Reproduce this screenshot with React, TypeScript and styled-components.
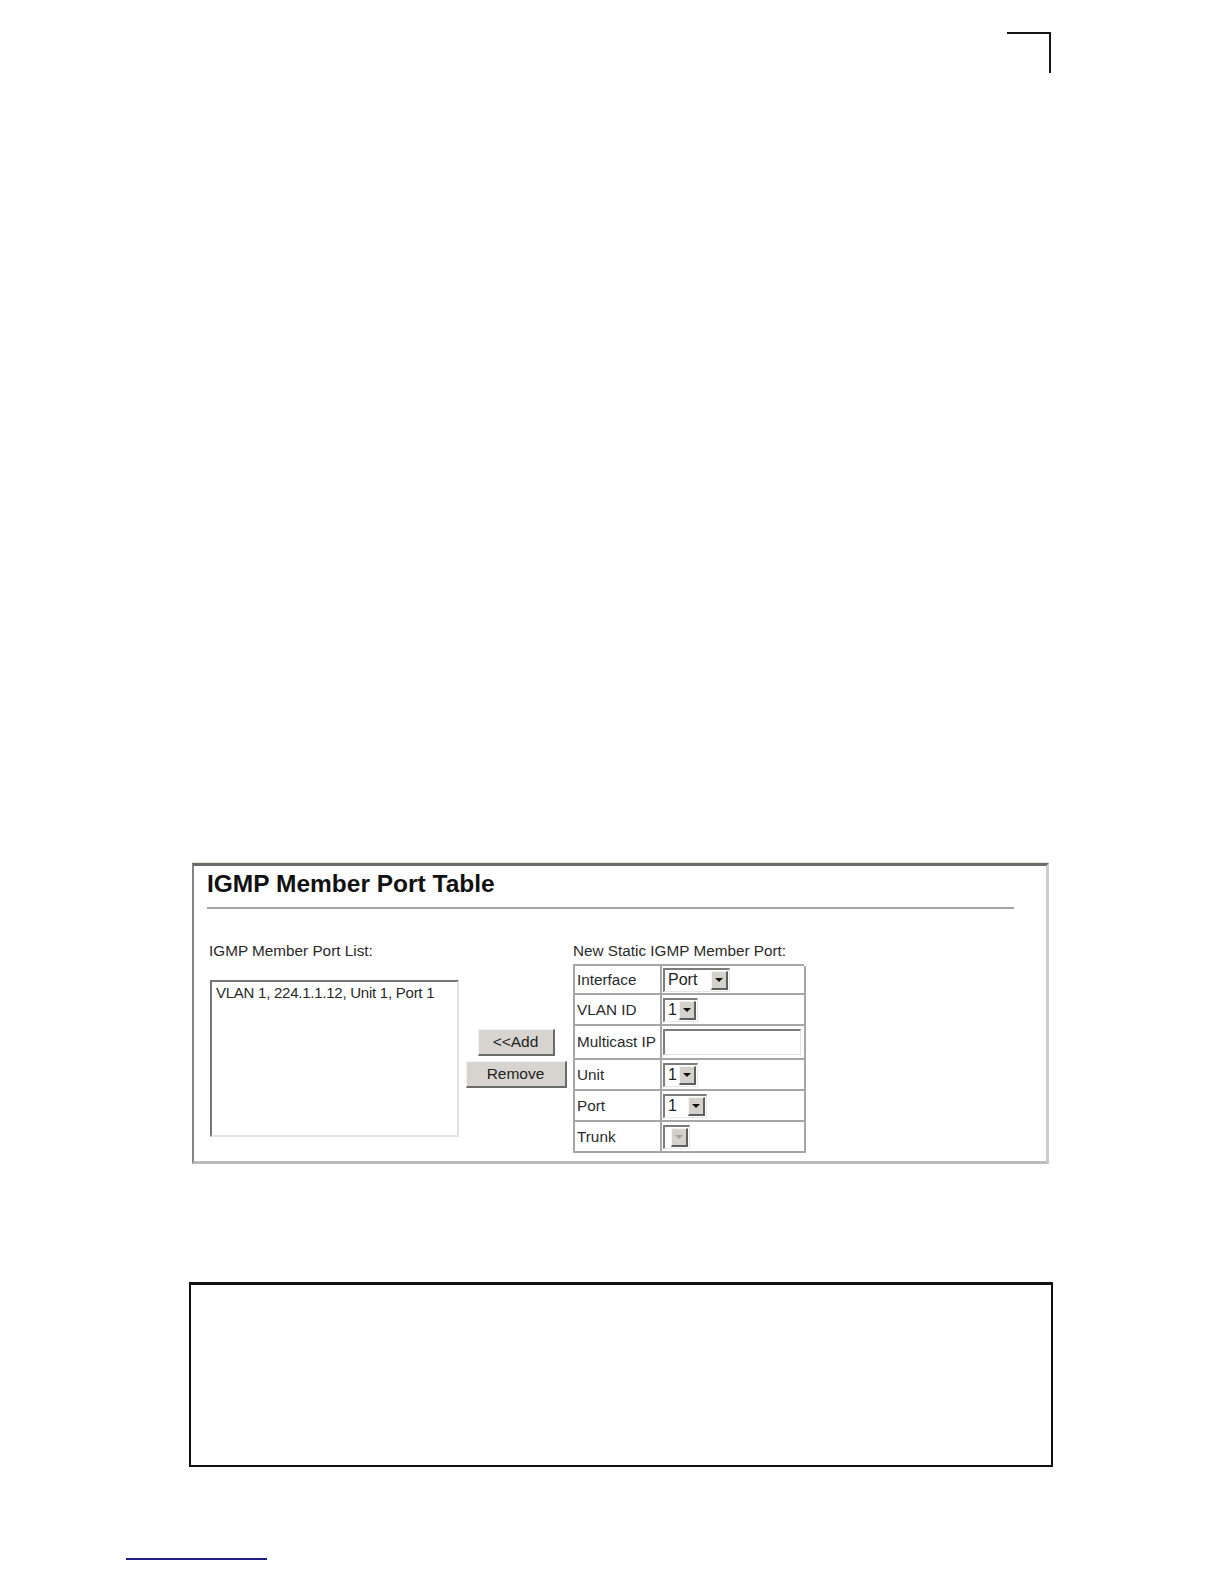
import React, { FC } from 'react';
import styled, { createGlobalStyle } from 'styled-components';

const GlobalStyle = createGlobalStyle`
  html, body {
    margin: 0;
    padding: 0;
    background: #ffffff;
  }
  body {
    font-family: 'Liberation Sans', Arial, sans-serif;
    color: #1e1e1e;
  }
`;

const Page = styled.div`
  width: 1224px;
  height: 1584px;
  display: flex;
  flex-direction: column;
  align-items: flex-start;
  overflow: hidden;
`;

const CropMark = styled.div`
  align-self: flex-end;
  box-sizing: border-box;
  width: 44px;
  height: 41px;
  margin-top: 32px;
  margin-right: 173px;
  border-top: 2px solid #151515;
  border-right: 2px solid #151515;
`;

const Screenshot = styled.div`
  box-sizing: border-box;
  width: 857px;
  height: 301px;
  margin-top: 790px;
  margin-left: 192px;
  padding: 4px 0 0 13px;
  background: #ffffff;
  border-top: 3px solid #6c6c6c;
  border-left: 2px solid #858585;
  border-right: 3px solid #cdcdcd;
  border-bottom: 3px solid #bcbcbc;
  box-shadow: 0 -1px 0 #e3e8cf;
`;

const Title = styled.h1`
  margin: 0;
  font-size: 24.5px;
  line-height: 28px;
  font-weight: bold;
  color: #111111;
`;

const Rule = styled.div`
  width: 807px;
  height: 2px;
  margin-top: 9px;
  background: #a4a4a4;
`;

const FormGrid = styled.div`
  display: grid;
  grid-template-columns: 250px 114px auto;
  grid-template-rows: 18px auto;
  row-gap: 4px;
  margin-top: 33px;
  margin-left: 2px;
`;

const Caption = styled.div<{ $col: number }>`
  grid-column: ${(p) => p.$col};
  grid-row: 1;
  font-size: 15.3px;
  line-height: 18px;
  color: #2a2a2a;
  white-space: nowrap;
`;

const ListBox = styled.div`
  grid-column: 1;
  grid-row: 2;
  align-self: start;
  box-sizing: border-box;
  width: 249px;
  height: 157px;
  margin-top: 16px;
  margin-left: 1px;
  padding: 2px 4px;
  border-top: 2px solid #767676;
  border-left: 2px solid #767676;
  border-right: 2px solid #e2e2e2;
  border-bottom: 2px solid #e2e2e2;
  font-size: 15px;
  line-height: 17px;
  letter-spacing: -0.25px;
  color: #2a2a2a;
  white-space: nowrap;
`;

const ButtonStack = styled.div`
  grid-column: 2;
  grid-row: 2;
  align-self: center;
  display: flex;
  flex-direction: column;
  align-items: center;
  gap: 5px;
`;

const Button = styled.button<{ $width: number }>`
  box-sizing: border-box;
  width: ${(p) => p.$width}px;
  height: 27px;
  padding: 0;
  background: #d7d4cf;
  border-top: 1px solid #f2f2f2;
  border-left: 1px solid #f2f2f2;
  border-right: 2px solid #6a6a6a;
  border-bottom: 2px solid #6a6a6a;
  font-family: 'Liberation Sans', Arial, sans-serif;
  font-size: 15.5px;
  line-height: 22px;
  color: #222222;
`;

const MemberTable = styled.div`
  grid-column: 3;
  grid-row: 2;
  display: grid;
  grid-template-columns: 87px 144px;
  grid-template-rows: 29px 31px 34px 31px 31px 31px;
  width: 231px;
  box-sizing: border-box;
  border-top: 2px solid #a6a6a6;
  border-left: 2px solid #a6a6a6;
`;

const Cell = styled.div<{ $label?: boolean }>`
  display: flex;
  align-items: center;
  box-sizing: border-box;
  padding-left: ${(p) => (p.$label ? 2 : 1)}px;
  border-right: 2px solid #a6a6a6;
  border-bottom: 2px solid #a6a6a6;
  font-size: 15.3px;
  color: #2a2a2a;
  white-space: nowrap;
`;

const Select = styled.div<{ $width: number }>`
  display: flex;
  align-items: center;
  justify-content: space-between;
  box-sizing: border-box;
  width: ${(p) => p.$width}px;
  height: 24px;
  padding: 0 1px 0 3px;
  background: #ffffff;
  border-top: 2px solid #7c7c7c;
  border-left: 2px solid #7c7c7c;
  border-right: 1px solid #e6e6e6;
  border-bottom: 1px solid #e6e6e6;
  font-size: 16px;
  color: #222222;
`;

const ArrowButton = styled.span<{ $disabled?: boolean }>`
  display: flex;
  align-items: center;
  justify-content: center;
  box-sizing: border-box;
  width: 17px;
  height: 19px;
  background: #d4d1cb;
  border-top: 1px solid #f4f4f4;
  border-left: 1px solid #f4f4f4;
  border-right: 2px solid #5e5e5e;
  border-bottom: 2px solid #5e5e5e;

  &::after {
    content: '';
    width: 0;
    height: 0;
    border-left: 4px solid transparent;
    border-right: 4px solid transparent;
    border-top: 4px solid ${(p) => (p.$disabled ? '#a2a2a2' : '#111111')};
  }
`;

const TextInput = styled.input`
  box-sizing: border-box;
  width: 138px;
  height: 26px;
  margin-left: 0;
  background: #ffffff;
  border-top: 2px solid #7c7c7c;
  border-left: 2px solid #7c7c7c;
  border-right: 1px solid #e2e2e2;
  border-bottom: 1px solid #e2e2e2;
  outline: none;
`;

const NoteBox = styled.div`
  box-sizing: border-box;
  width: 864px;
  height: 185px;
  margin-top: 118px;
  margin-left: 189px;
  border: 2px solid #111111;
  border-top-width: 3px;
`;

const FooterRule = styled.div`
  width: 141px;
  height: 2px;
  margin-top: 91px;
  margin-left: 126px;
  background: #1d1d8c;
`;

interface DropdownProps {
  value?: string;
  width: number;
  disabled?: boolean;
}

const Dropdown: FC<DropdownProps> = ({ value = '', width, disabled }) => (
  <Select $width={width}>
    <span>{value}</span>
    <ArrowButton $disabled={disabled} />
  </Select>
);

const rows: { label: string; control: React.ReactNode }[] = [
  { label: 'Interface', control: <Dropdown value="Port" width={67} /> },
  { label: 'VLAN ID', control: <Dropdown value="1" width={35} /> },
  { label: 'Multicast IP', control: <TextInput type="text" /> },
  { label: 'Unit', control: <Dropdown value="1" width={35} /> },
  { label: 'Port', control: <Dropdown value="1" width={44} /> },
  { label: 'Trunk', control: <Dropdown width={27} disabled /> },
];

const App: FC = () => (
  <>
    <GlobalStyle />
    <Page>
      <CropMark />
      <Screenshot>
        <Title>IGMP Member Port Table</Title>
        <Rule />
        <FormGrid>
          <Caption $col={1}>IGMP Member Port List:</Caption>
          <Caption $col={3}>New Static IGMP Member Port:</Caption>
          <ListBox>VLAN 1, 224.1.1.12, Unit 1, Port 1</ListBox>
          <ButtonStack>
            <Button $width={77}>&lt;&lt;Add</Button>
            <Button $width={101}>Remove</Button>
          </ButtonStack>
          <MemberTable>
            {rows.map((row) => (
              <React.Fragment key={row.label}>
                <Cell $label>{row.label}</Cell>
                <Cell>{row.control}</Cell>
              </React.Fragment>
            ))}
          </MemberTable>
        </FormGrid>
      </Screenshot>
      <NoteBox />
      <FooterRule />
    </Page>
  </>
);

export default App;
